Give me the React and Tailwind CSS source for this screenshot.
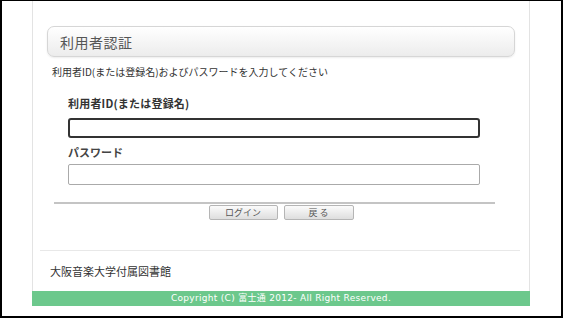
import React from "react";

const jp = { fontFamily: '"Noto Sans CJK JP", "Noto Sans", sans-serif' };

export default function App() {
  return (
    <div
      className="w-[563px] h-[318px] bg-white border-black border-t border-l-2 border-r-2 border-b-2 overflow-hidden"
      style={jp}
    >
      <div className="ml-[30px] w-[498px] flex flex-col">
        <div className="h-[290px] border-x border-[#e3e3e3] flex flex-col">
          <div className="mt-[25px] ml-[14px] mr-[14px] h-[31px] rounded-[7px] border border-[#d6d6d6] bg-gradient-to-b from-[#ffffff] to-[#ececec] shadow-[0_1px_2px_rgba(0,0,0,0.08)] flex items-center pl-[12px]">
            <span className="text-[14px] text-[#555] tracking-[0.5px] leading-none">利用者認証</span>
          </div>
          <div className="mt-[8px] ml-[19px] text-[10px] leading-[14px] text-[#333]">
            利用者ID(または登録名)およびパスワードを入力してください
          </div>
          <div className="ml-[21px] mr-[34px] flex flex-col">
            <div className="ml-[14px] mt-[17px] text-[11px] font-bold leading-[14px] text-[#333] tracking-[0.2px]">
              利用者ID(または登録名)
            </div>
            <div className="ml-[14px] mr-[15px] mt-[8px] h-[20px] rounded-[3px] border-2 border-[#333] bg-white" />
            <div className="ml-[14px] mt-[7px] text-[11px] font-bold leading-[14px] text-[#444]">
              パスワード
            </div>
            <div className="ml-[14px] mr-[15px] mt-[5px] h-[21px] rounded-[2px] border border-[#aaa] bg-white" />
            <div className="mt-[17px] h-[2px] bg-[#c4c4c4]" />
          </div>
          <div className="flex justify-center gap-[6px] mt-[1px]">
            <button className="w-[69px] h-[15px] rounded-[2px] border border-[#b5b5b5] bg-gradient-to-b from-[#fbfbfb] to-[#dedede] text-[9px] leading-none text-[#555]">
              ログイン
            </button>
            <button className="w-[70px] h-[15px] rounded-[2px] border border-[#b5b5b5] bg-gradient-to-b from-[#fbfbfb] to-[#dedede] text-[9px] leading-none text-[#555]">
              戻 る
            </button>
          </div>
          <div className="mt-[30px] ml-[7px] mr-[9px] h-px bg-[#e8e8e8]" />
          <div className="mt-[13px] ml-[17px] text-[11px] leading-[14px] text-[#333]">
            大阪音楽大学付属図書館
          </div>
        </div>
        <div
          className="h-[15px] bg-[#6cc88c] flex items-center justify-center text-white text-[9px] leading-none tracking-[0.3px]"
          style={{ fontFamily: '"DejaVu Sans", "Noto Sans CJK JP", sans-serif' }}
        >
          Copyright (C) 富士通 2012- All Right Reserved.
        </div>
      </div>
    </div>
  );
}
